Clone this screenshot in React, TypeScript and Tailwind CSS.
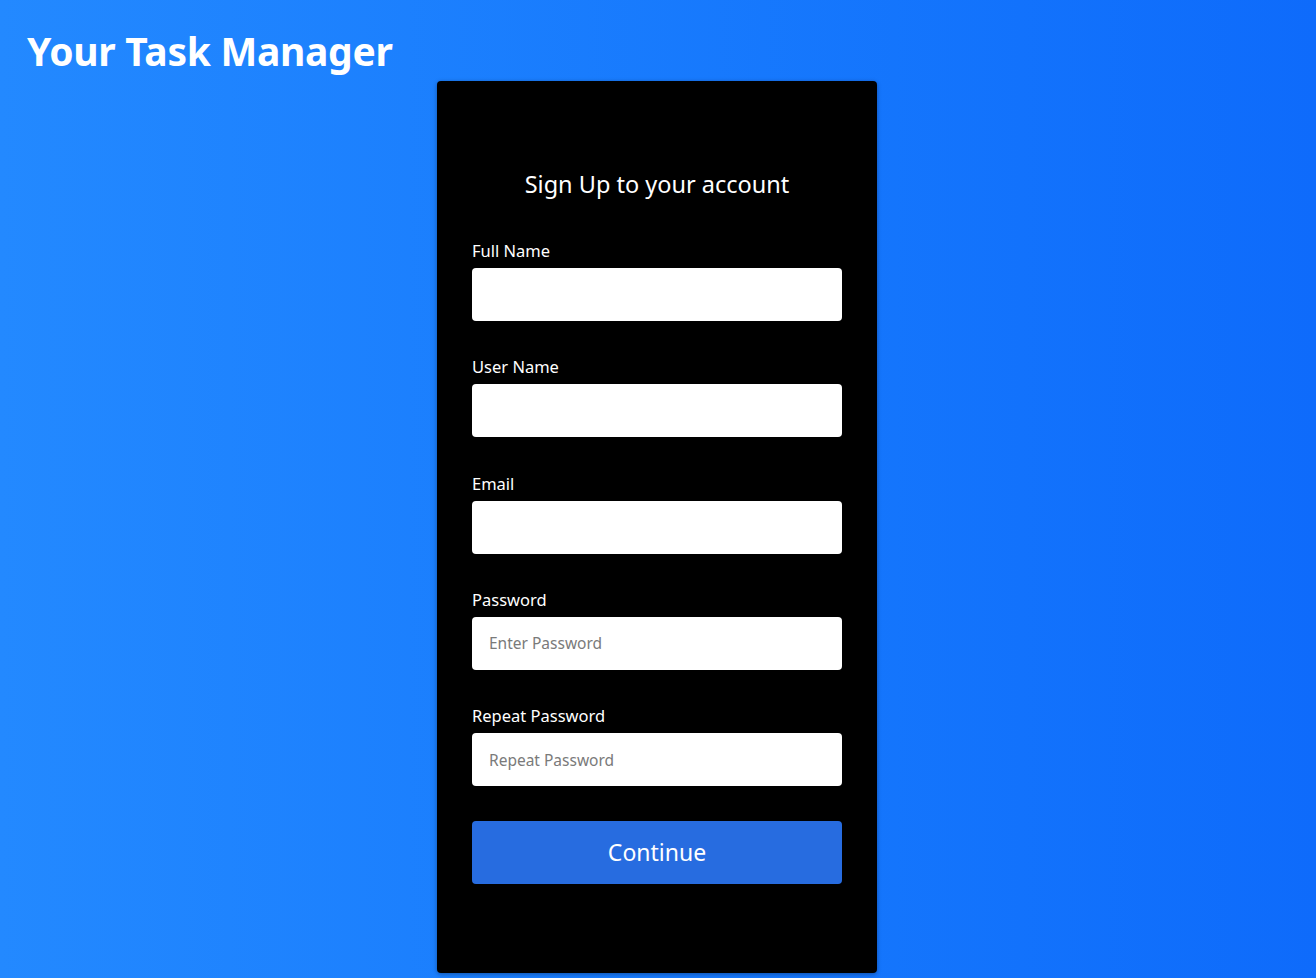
const fields = [
  { label: 'Full Name', placeholder: '', type: 'text' },
  { label: 'User Name', placeholder: '', type: 'text' },
  { label: 'Email', placeholder: '', type: 'email' },
  { label: 'Password', placeholder: 'Enter Password', type: 'password' },
  { label: 'Repeat Password', placeholder: 'Repeat Password', type: 'password' },
]

export default function App() {
  return (
    <div
      className="min-h-screen w-full bg-gradient-to-r from-[#2389ff] to-[#0e6bfb] font-['Noto_Sans',sans-serif] text-white"
    >
      {/* Header */}
      <header className="px-[27px] pt-[26px] h-[81px]">
        <h1 className="text-[39px] leading-[50px] font-bold tracking-[-0.3px]">Your Task Manager</h1>
      </header>

      {/* Sign up card */}
      <div className="flex justify-center pr-[2px]">
        <div className="w-[440px] bg-black rounded-[4px] shadow-[0_1px_4px_rgba(0,0,0,0.35)] px-[35px] pt-[87px] pb-[89px]">
          <h2 className="text-center text-[23.5px] leading-[32px] mb-[39px]">Sign Up to your account</h2>

          <form className="flex flex-col gap-[34px]" onSubmit={(e) => e.preventDefault()}>
            {fields.map((f, i) => (
              <div key={f.label} className={`flex flex-col gap-[5px] ${i > 0 ? 'pt-[0.25px]' : ''}`}>
                <label className="text-[16.5px] leading-[24px]">{f.label}</label>
                <input
                  type={f.type}
                  placeholder={f.placeholder}
                  className="h-[53px] w-full rounded-[4px] bg-white px-[17px] text-[15.5px] text-black placeholder:text-[#7a7a7a] outline-none"
                />
              </div>
            ))}

            <button
              type="submit"
              className="mt-[1px] h-[63px] w-full rounded-[4px] bg-[#276ce0] text-[23px] text-white"
            >
              Continue
            </button>
          </form>
        </div>
      </div>
    </div>
  )
}
